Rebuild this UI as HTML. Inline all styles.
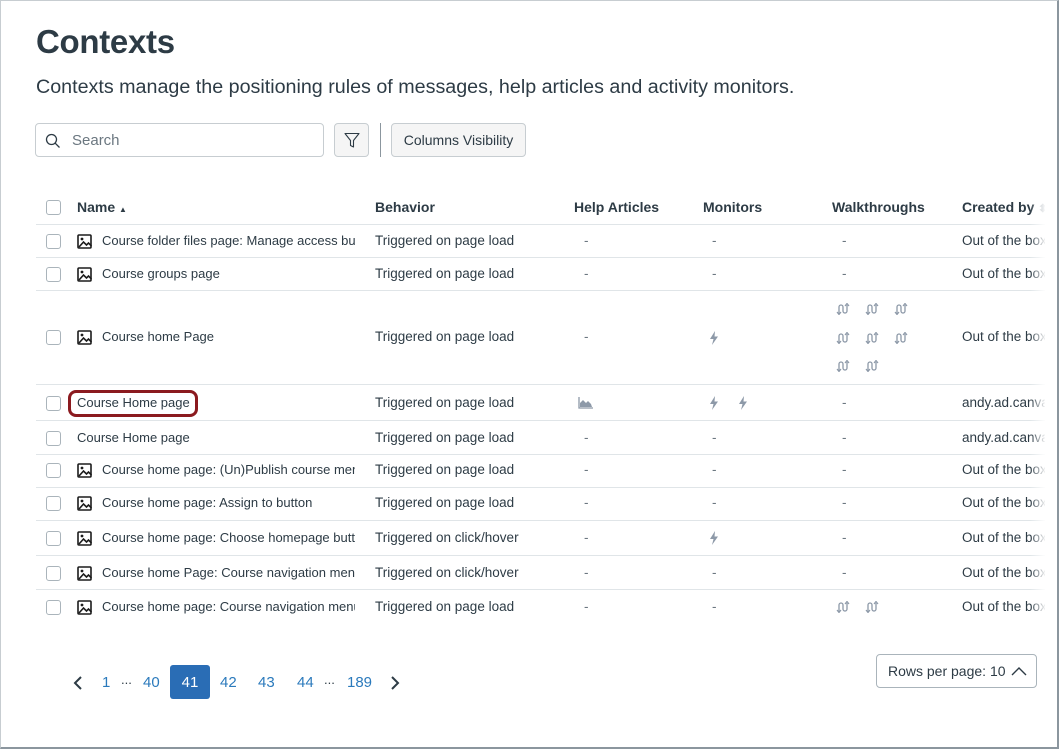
<!DOCTYPE html>
<html><head><meta charset="utf-8"><style>
*{box-sizing:border-box;margin:0;padding:0}
body{width:1061px;height:751px;background:#fff;font-family:"Liberation Sans",sans-serif;color:#2d3b45;position:relative;overflow:hidden}
.frame{position:absolute;left:0;top:0;width:1059px;height:749px;border:1px solid #c7cdd1;border-right:2px solid #8b969e;border-bottom:2px solid #8b969e;z-index:5;pointer-events:none}
.a{position:absolute;white-space:nowrap}
h1{position:absolute;left:36px;top:23px;font-size:33px;font-weight:bold;color:#2d3b45;letter-spacing:-0.3px}
.sub{left:36px;top:76px;font-size:19.7px;color:#2d3b45}
.search{left:35px;top:123px;width:289px;height:34px;border:1px solid #c7cdd1;border-radius:4px}
.btn{border:1px solid #c7cdd1;border-radius:4px;background:#f5f5f5;height:34px}
.cb{position:absolute;left:46px;width:15px;height:15px;border:1px solid #aab4bb;border-radius:3px;background:#fff}
.t{font-size:13.5px;line-height:18px}
.nm{width:253px;overflow:hidden;font-size:13px}
.th{font-size:14px;font-weight:bold;line-height:18px}
.hl{position:absolute;left:36px;width:1010px;height:1px;background:#e0e5e8}
.d{color:#6b7780}
.ic{position:absolute;left:77px;width:15px;height:15px}
.pg{font-size:15px;color:#2b7abc}
.fade{position:absolute;left:1030px;top:185px;width:16px;height:440px;background:linear-gradient(to right,rgba(255,255,255,0),#fff)}
</style></head><body>
<div class="frame"></div>
<h1>Contexts</h1>
<div class="a sub">Contexts manage the positioning rules of messages, help articles and activity monitors.</div>
<div class="a search"><svg style="position:absolute;left:9px;top:9px" width="16" height="16" viewBox="0 0 16 16"><circle cx="6.5" cy="6.5" r="5" fill="none" stroke="#2d3b45" stroke-width="1.3"/><line x1="10.2" y1="10.2" x2="14.5" y2="14.5" stroke="#2d3b45" stroke-width="1.3"/></svg><span class="a" style="left:36px;top:8px;font-size:15px;color:#6b7780">Search</span></div>
<div class="a btn" style="left:334px;top:123px;width:35px"><svg style="position:absolute;left:9px;top:8px" width="16" height="17" viewBox="0 0 16 17"><path d="M1 1.5h14l-5.5 7v6.5l-3-1.5v-5z" fill="none" stroke="#2d3b45" stroke-width="1.1" stroke-linejoin="round"/></svg></div>
<div class="a" style="left:380px;top:123px;width:1px;height:34px;background:#8b969e"></div>
<div class="a btn" style="left:391px;top:123px;width:135px;font-size:14px;line-height:32px;text-align:center;color:#2d3b45">Columns Visibility</div>

<div class="cb" style="top:200px"></div>
<div class="a th" style="left:77px;top:198px">Name <span style="font-size:8px">▲</span></div>
<div class="a th" style="left:375px;top:198px">Behavior</div>
<div class="a th" style="left:574px;top:198px">Help Articles</div>
<div class="a th" style="left:703px;top:198px">Monitors</div>
<div class="a th" style="left:832px;top:198px">Walkthroughs</div>
<div class="a th" style="left:962px;top:198px">Created by <span style="font-size:11px;color:#8b969e">⬍</span></div>

<div class="hl" style="top:224px"></div>
<div class="hl" style="top:257px"></div>
<div class="hl" style="top:290px"></div>
<div class="hl" style="top:384px"></div>
<div class="hl" style="top:420px"></div>
<div class="hl" style="top:454px"></div>
<div class="hl" style="top:487px"></div>
<div class="hl" style="top:520px"></div>
<div class="hl" style="top:555px"></div>
<div class="hl" style="top:589px"></div>

<svg width="0" height="0" style="position:absolute"><defs>
<symbol id="img" viewBox="0 0 15 15"><rect x="1" y="1" width="13" height="13" rx="1" fill="none" stroke="#1c1c1c" stroke-width="1.6"/><circle cx="5" cy="5" r="1.4" fill="#1c1c1c"/><path d="M2 13l4.5-5 3 3 2-2 3 3" fill="none" stroke="#1c1c1c" stroke-width="1.6"/></symbol>
<symbol id="bolt" viewBox="0 0 10 14"><path d="M6 0L1 8h3.5L3 14l6-8.5H5.5z" fill="#8d99a8"/></symbol>
<symbol id="wt" viewBox="0 0 14 12"><path d="M3 11V4a2 2 0 0 1 4 0v4a2 2 0 0 0 4 0V2" fill="none" stroke="#8d99a8" stroke-width="1.3"/><path d="M1 9l2 2.5 2-2.5M9 3l2-2.5 2 2.5" fill="none" stroke="#8d99a8" stroke-width="1.2"/></symbol>
<symbol id="chart" viewBox="0 0 15 12"><path d="M1 0v11h14" fill="none" stroke="#8d99a8" stroke-width="1.3"/><path d="M2 10V6l3-3 3 3 2-2 3 3 1 3z" fill="#8d99a8"/></symbol>
</defs></svg>

<div class="cb" style="top:234px"></div><svg class="ic" style="top:234px"><use href="#img"/></svg>
<div class="a t nm" style="left:102px;top:232px">Course folder files page: Manage access butto</div>
<div class="a t" style="left:375px;top:232px">Triggered on page load</div>
<div class="a t d" style="left:584px;top:232px">-</div><div class="a t d" style="left:712px;top:232px">-</div><div class="a t d" style="left:842px;top:232px">-</div>
<div class="a t" style="left:962px;top:232px">Out of the box</div>

<div class="cb" style="top:267px"></div><svg class="ic" style="top:267px"><use href="#img"/></svg>
<div class="a t nm" style="left:102px;top:265px">Course groups page</div>
<div class="a t" style="left:375px;top:265px">Triggered on page load</div>
<div class="a t d" style="left:584px;top:265px">-</div><div class="a t d" style="left:712px;top:265px">-</div><div class="a t d" style="left:842px;top:265px">-</div>
<div class="a t" style="left:962px;top:265px">Out of the box</div>

<div class="cb" style="top:330px"></div><svg class="ic" style="top:330px"><use href="#img"/></svg>
<div class="a t nm" style="left:102px;top:328px">Course home Page</div>
<div class="a t" style="left:375px;top:328px">Triggered on page load</div>
<div class="a t d" style="left:584px;top:328px">-</div>
<svg class="a" style="left:709px;top:331px" width="10" height="14"><use href="#bolt"/></svg>
<svg class="a" style="left:836px;top:303px" width="14" height="12"><use href="#wt"/></svg>
<svg class="a" style="left:865px;top:303px" width="14" height="12"><use href="#wt"/></svg>
<svg class="a" style="left:894px;top:303px" width="14" height="12"><use href="#wt"/></svg>
<svg class="a" style="left:836px;top:332px" width="14" height="12"><use href="#wt"/></svg>
<svg class="a" style="left:865px;top:332px" width="14" height="12"><use href="#wt"/></svg>
<svg class="a" style="left:894px;top:332px" width="14" height="12"><use href="#wt"/></svg>
<svg class="a" style="left:836px;top:360px" width="14" height="12"><use href="#wt"/></svg>
<svg class="a" style="left:865px;top:360px" width="14" height="12"><use href="#wt"/></svg>
<div class="a t" style="left:962px;top:328px">Out of the box</div>

<div class="cb" style="top:396px"></div>
<div class="a" style="left:68px;top:390px;width:130px;height:27px;border:3px solid #8b1a1f;border-radius:8px"></div>
<div class="a t" style="left:77px;top:394px;font-size:13px">Course Home page</div>
<div class="a t" style="left:375px;top:394px">Triggered on page load</div>
<svg class="a" style="left:578px;top:397px" width="15" height="12"><use href="#chart"/></svg>
<svg class="a" style="left:709px;top:396px" width="10" height="14"><use href="#bolt"/></svg>
<svg class="a" style="left:738px;top:396px" width="10" height="14"><use href="#bolt"/></svg>
<div class="a t d" style="left:842px;top:394px">-</div>
<div class="a t" style="left:962px;top:394px">andy.ad.canvas</div>

<div class="cb" style="top:431px"></div>
<div class="a t" style="left:77px;top:429px;font-size:13px">Course Home page</div>
<div class="a t" style="left:375px;top:429px">Triggered on page load</div>
<div class="a t d" style="left:584px;top:429px">-</div><div class="a t d" style="left:712px;top:429px">-</div><div class="a t d" style="left:842px;top:429px">-</div>
<div class="a t" style="left:962px;top:429px">andy.ad.canvas</div>

<div class="cb" style="top:463px"></div><svg class="ic" style="top:463px"><use href="#img"/></svg>
<div class="a t nm" style="left:102px;top:461px">Course home page: (Un)Publish course menu</div>
<div class="a t" style="left:375px;top:461px">Triggered on page load</div>
<div class="a t d" style="left:584px;top:461px">-</div><div class="a t d" style="left:712px;top:461px">-</div><div class="a t d" style="left:842px;top:461px">-</div>
<div class="a t" style="left:962px;top:461px">Out of the box</div>

<div class="cb" style="top:496px"></div><svg class="ic" style="top:496px"><use href="#img"/></svg>
<div class="a t nm" style="left:102px;top:494px">Course home page: Assign to button</div>
<div class="a t" style="left:375px;top:494px">Triggered on page load</div>
<div class="a t d" style="left:584px;top:494px">-</div><div class="a t d" style="left:712px;top:494px">-</div><div class="a t d" style="left:842px;top:494px">-</div>
<div class="a t" style="left:962px;top:494px">Out of the box</div>

<div class="cb" style="top:531px"></div><svg class="ic" style="top:531px"><use href="#img"/></svg>
<div class="a t nm" style="left:102px;top:529px">Course home page: Choose homepage button</div>
<div class="a t" style="left:375px;top:529px">Triggered on click/hover</div>
<div class="a t d" style="left:584px;top:529px">-</div>
<svg class="a" style="left:709px;top:531px" width="10" height="14"><use href="#bolt"/></svg>
<div class="a t d" style="left:842px;top:529px">-</div>
<div class="a t" style="left:962px;top:529px">Out of the box</div>

<div class="cb" style="top:566px"></div><svg class="ic" style="top:566px"><use href="#img"/></svg>
<div class="a t nm" style="left:102px;top:564px">Course home Page: Course navigation menu; A</div>
<div class="a t" style="left:375px;top:564px">Triggered on click/hover</div>
<div class="a t d" style="left:584px;top:564px">-</div><div class="a t d" style="left:712px;top:564px">-</div><div class="a t d" style="left:842px;top:564px">-</div>
<div class="a t" style="left:962px;top:564px">Out of the box</div>

<div class="cb" style="top:600px"></div><svg class="ic" style="top:600px"><use href="#img"/></svg>
<div class="a t nm" style="left:102px;top:598px">Course home page: Course navigation menu: A</div>
<div class="a t" style="left:375px;top:598px">Triggered on page load</div>
<div class="a t d" style="left:584px;top:598px">-</div><div class="a t d" style="left:712px;top:598px">-</div>
<svg class="a" style="left:836px;top:601px" width="14" height="12"><use href="#wt"/></svg>
<svg class="a" style="left:865px;top:601px" width="14" height="12"><use href="#wt"/></svg>
<div class="a t" style="left:962px;top:598px">Out of the box</div>

<div class="a" style="left:1045px;top:185px;width:14px;height:445px;background:#fff"></div>
<div class="fade"></div>

<svg class="a" style="left:73px;top:675px" width="10" height="16"><path d="M8 2L2 8l6 6" fill="none" stroke="#2d3b45" stroke-width="2"/></svg>
<div class="a pg" style="left:102px;top:674px">1</div>
<div class="a" style="left:121px;top:672px;font-size:13px;color:#2d3b45">...</div>
<div class="a pg" style="left:143px;top:674px">40</div>
<div class="a" style="left:170px;top:665px;width:40px;height:34px;background:#2a6db5;border-radius:3px;color:#fff;font-size:15px;line-height:35px;text-align:center">41</div>
<div class="a pg" style="left:220px;top:674px">42</div>
<div class="a pg" style="left:258px;top:674px">43</div>
<div class="a pg" style="left:297px;top:674px">44</div>
<div class="a" style="left:324px;top:672px;font-size:13px;color:#2d3b45">...</div>
<div class="a pg" style="left:347px;top:674px">189</div>
<svg class="a" style="left:390px;top:675px" width="10" height="16"><path d="M2 2l6 6-6 6" fill="none" stroke="#2d3b45" stroke-width="2"/></svg>

<div class="a" style="left:876px;top:654px;width:161px;height:34px;border:1px solid #aab4bb;border-radius:4px;font-size:14px;line-height:33px;padding-left:11px;color:#2d3b45">Rows per page: 10</div>
<svg class="a" style="left:1011px;top:666px" width="16" height="10"><path d="M1 9l7-7 7 7" fill="none" stroke="#2d3b45" stroke-width="1.4"/></svg>
</body></html>
